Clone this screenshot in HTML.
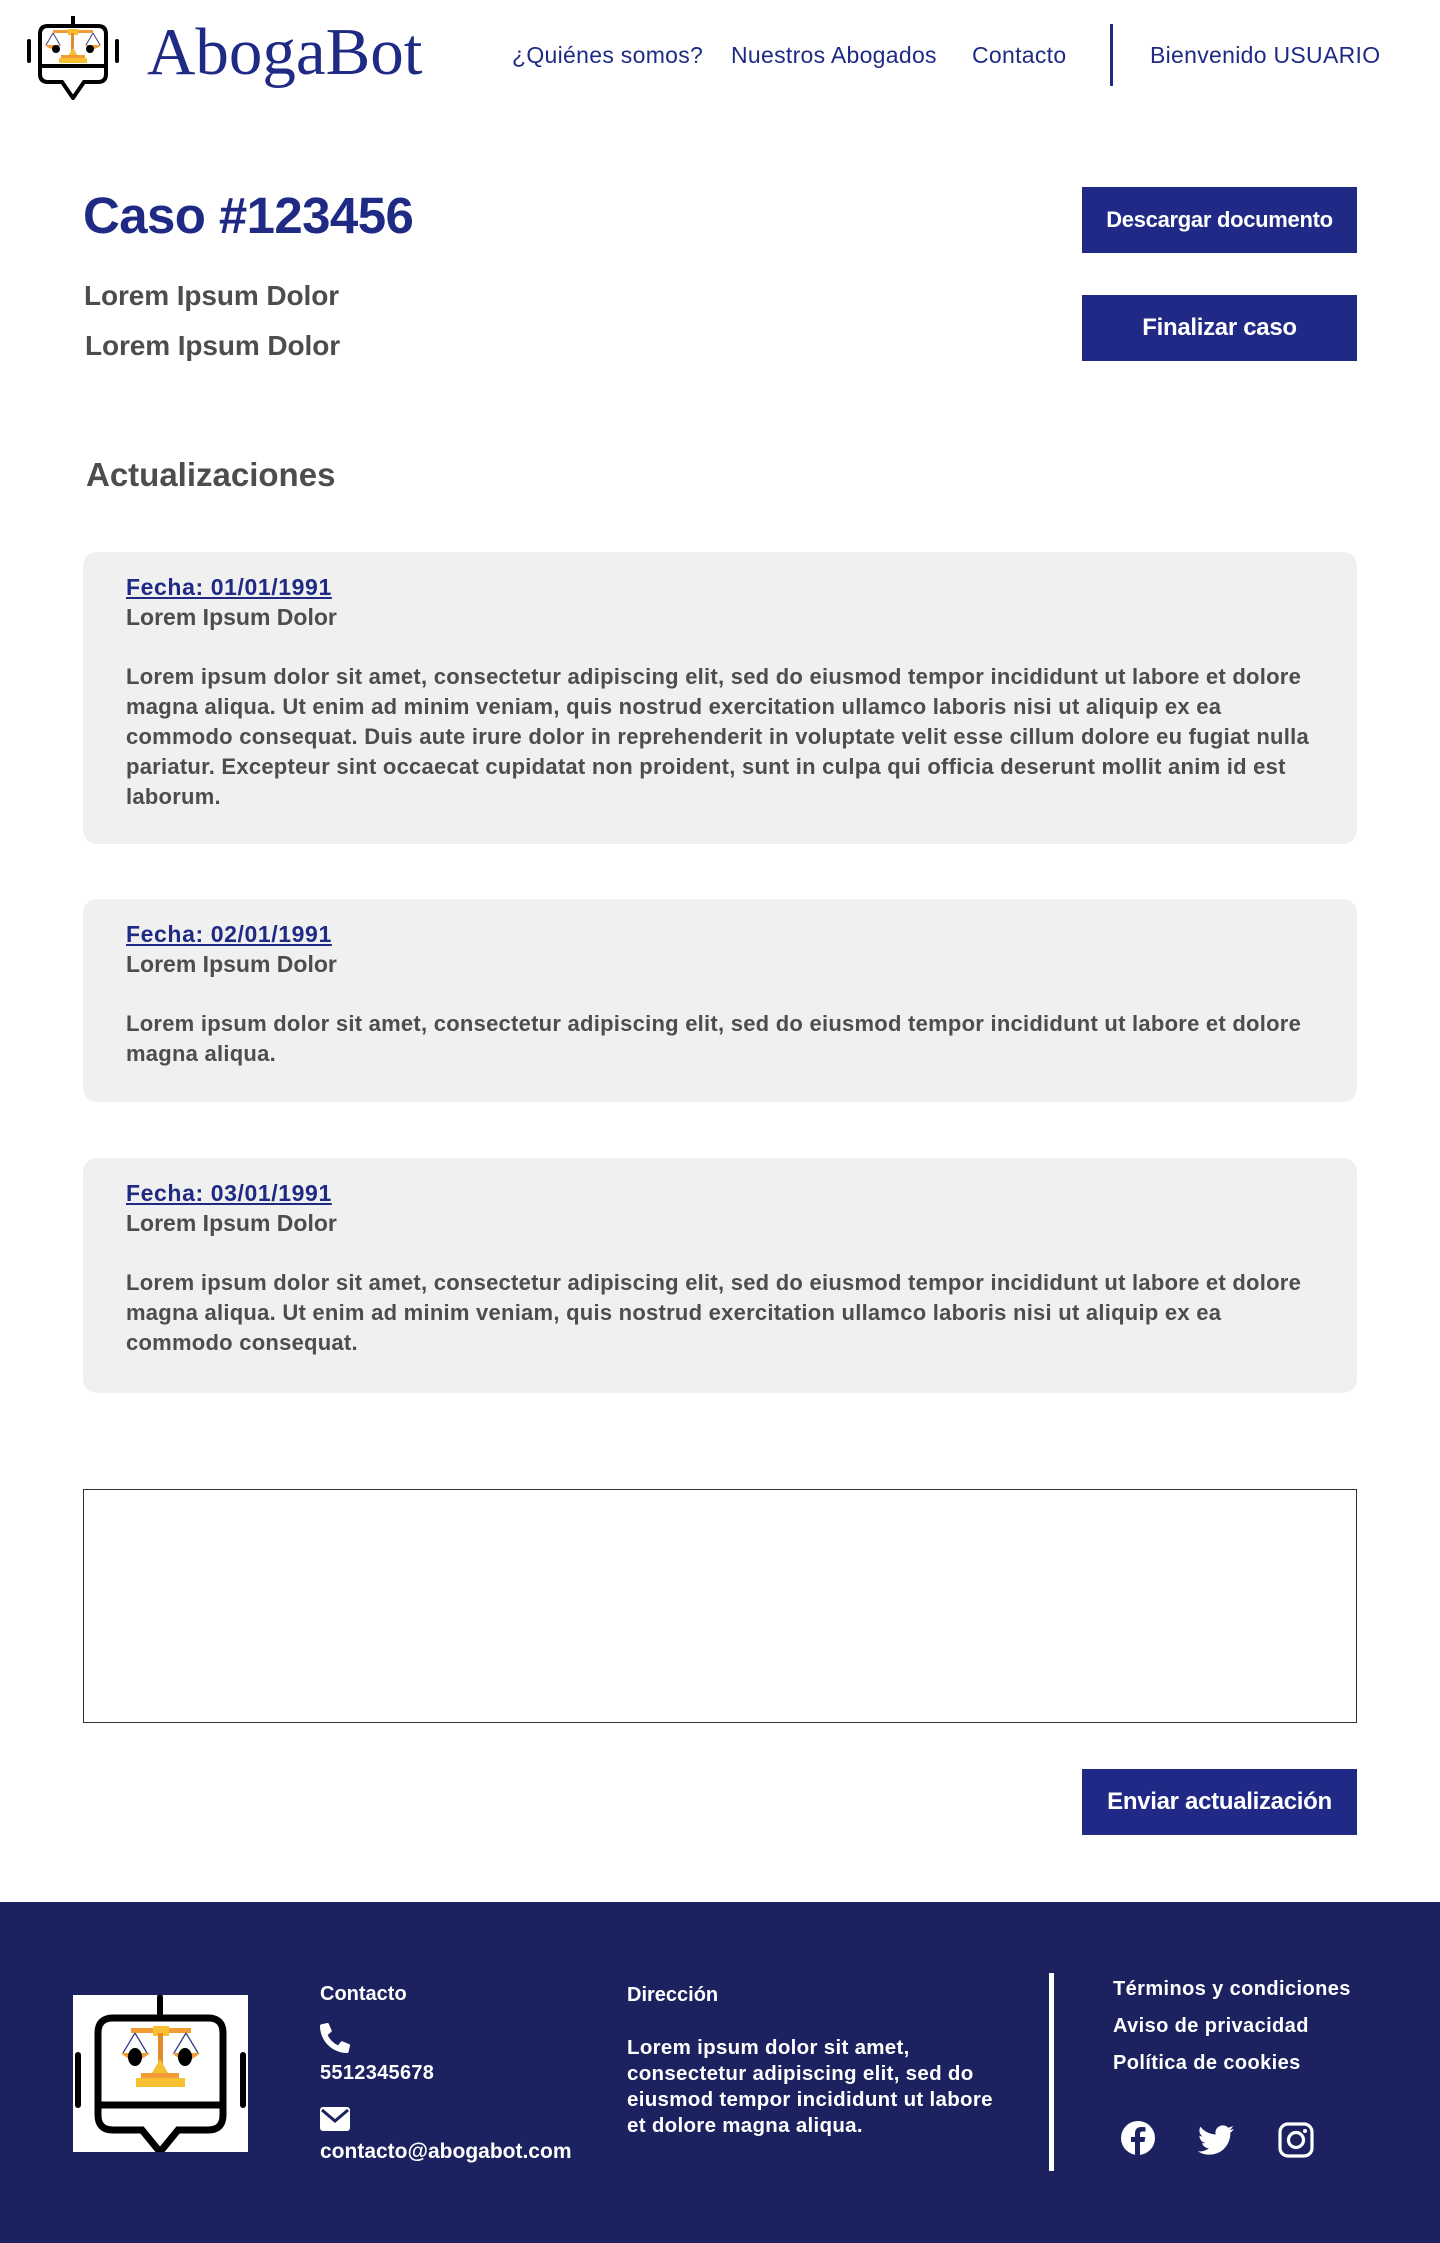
<!DOCTYPE html>
<html><head><meta charset="utf-8">
<style>
*{margin:0;padding:0;box-sizing:border-box}
body{width:1440px;height:2243px;background:#fff;font-family:"Liberation Sans",sans-serif;position:relative;overflow:hidden}
.a{position:absolute;white-space:nowrap}
.blue{color:#1f2a85}
.nav{font-size:23px;color:#1f2a85;top:42px;letter-spacing:0.3px}
.btn{position:absolute;left:1082px;width:275px;background:#212987;color:#fff;font-weight:bold;display:flex;align-items:center;justify-content:center;letter-spacing:-0.3px}
.card{position:absolute;left:83px;width:1274px;background:#f0f0f0;border-radius:14px}
.card .f{position:absolute;left:43px;font-size:23px;font-weight:bold;color:#1f2a85;text-decoration:underline;letter-spacing:0.6px}
.card .s{position:absolute;left:43px;font-size:23px;font-weight:bold;color:#4d4d4d;letter-spacing:0px}
.card .b{position:absolute;left:43px;font-size:22px;line-height:30px;font-weight:bold;color:#4d4d4d;letter-spacing:0.25px;white-space:nowrap}
.ft{color:#fff;font-weight:bold;font-size:20px;letter-spacing:0px}
</style></head><body>

<svg class="a" style="left:26px;top:16px" width="94" height="84" viewBox="0 0 94 84">
<line x1="47" y1="0" x2="47" y2="10" stroke="#000" stroke-width="4"/>
<line x1="3" y1="25" x2="3" y2="45" stroke="#000" stroke-width="4" stroke-linecap="round"/>
<line x1="91" y1="25" x2="91" y2="45" stroke="#000" stroke-width="4" stroke-linecap="round"/>
<path d="M22 10 H72 Q80 10 80 18 V58 Q80 66 72 66 H58 L47 82 L36 66 H22 Q14 66 14 58 V18 Q14 10 22 10 Z" fill="none" stroke="#000" stroke-width="4"/>
<line x1="14" y1="50" x2="80" y2="50" stroke="#000" stroke-width="4"/>
<rect x="27" y="14" width="40" height="3" fill="#f39b34"/>
<rect x="42" y="13" width="10" height="6" fill="#f7c030"/>
<rect x="45" y="17" width="3" height="20" fill="#e38a2c"/>
<path d="M27 17 L20 29 M27 17 L34 29 M67 17 L60 29 M67 17 L74 29" stroke="#3a4088" stroke-width="1"/>
<path d="M19 29 H35 Q27 37 19 29Z M59 29 H75 Q67 37 59 29Z" fill="#f39b34"/>
<circle cx="30" cy="33" r="4" fill="#000"/><circle cx="64" cy="33" r="4" fill="#000"/>
<path d="M47 32 L52 40 H42Z" fill="#f7c030"/>
<rect x="35" y="39" width="24" height="3" fill="#f39b34"/>
<rect x="33" y="42" width="28" height="5" fill="#f7c030"/>
</svg>
<div class="a blue" style="left:147px;top:12px;font-family:'Liberation Serif',serif;font-size:67px;line-height:80px">AbogaBot</div>

<div class="a nav" style="left:512px">¿Quiénes somos?</div>
<div class="a nav" style="left:731px">Nuestros Abogados</div>
<div class="a nav" style="left:972px">Contacto</div>
<div class="a" style="left:1110px;top:24px;width:3px;height:62px;background:#1f2a85"></div>
<div class="a nav" style="left:1150px">Bienvenido USUARIO</div>

<div class="a blue" style="left:83px;top:186px;font-size:51px;font-weight:bold;letter-spacing:-0.6px">Caso #123456</div>
<div class="a" style="left:84px;top:280px;font-size:28px;font-weight:bold;color:#4d4d4d;letter-spacing:-0.1px">Lorem Ipsum Dolor</div>
<div class="a" style="left:85px;top:330px;font-size:28px;font-weight:bold;color:#4d4d4d;letter-spacing:-0.1px">Lorem Ipsum Dolor</div>

<div class="btn" style="top:187px;height:66px;font-size:22px">Descargar documento</div>
<div class="btn" style="top:295px;height:66px;font-size:24px">Finalizar caso</div>

<div class="a" style="left:86px;top:456px;font-size:33px;font-weight:bold;color:#4d4d4d;letter-spacing:0px">Actualizaciones</div>

<div class="card" style="top:552px;height:292px">
<div class="f" style="top:22px">Fecha: 01/01/1991</div>
<div class="s" style="top:52px">Lorem Ipsum Dolor</div>
<div class="b" style="top:110px">Lorem ipsum dolor sit amet, consectetur adipiscing elit, sed do eiusmod tempor incididunt ut labore et dolore<br>magna aliqua. Ut enim ad minim veniam, quis nostrud exercitation ullamco laboris nisi ut aliquip ex ea<br>commodo consequat. Duis aute irure dolor in reprehenderit in voluptate velit esse cillum dolore eu fugiat nulla<br>pariatur. Excepteur sint occaecat cupidatat non proident, sunt in culpa qui officia deserunt mollit anim id est<br>laborum.</div>
</div>

<div class="card" style="top:899px;height:203px">
<div class="f" style="top:22px">Fecha: 02/01/1991</div>
<div class="s" style="top:52px">Lorem Ipsum Dolor</div>
<div class="b" style="top:110px">Lorem ipsum dolor sit amet, consectetur adipiscing elit, sed do eiusmod tempor incididunt ut labore et dolore<br>magna aliqua.</div>
</div>

<div class="card" style="top:1158px;height:235px">
<div class="f" style="top:22px">Fecha: 03/01/1991</div>
<div class="s" style="top:52px">Lorem Ipsum Dolor</div>
<div class="b" style="top:110px">Lorem ipsum dolor sit amet, consectetur adipiscing elit, sed do eiusmod tempor incididunt ut labore et dolore<br>magna aliqua. Ut enim ad minim veniam, quis nostrud exercitation ullamco laboris nisi ut aliquip ex ea<br>commodo consequat.</div>
</div>

<div class="a" style="left:83px;top:1489px;width:1274px;height:234px;border:1px solid #333"></div>
<div class="btn" style="top:1769px;height:66px;font-size:24px">Enviar actualización</div>

<div class="a" style="left:0;top:1902px;width:1440px;height:341px;background:#1c2260"></div>
<div class="a" style="left:73px;top:1995px;width:175px;height:157px;background:#fff"></div>
<svg class="a" style="left:73px;top:1995px" width="175" height="157" viewBox="0 0 175 157">
<line x1="87" y1="2" x2="87" y2="22" stroke="#000" stroke-width="6" stroke-linecap="round"/>
<line x1="5" y1="60" x2="5" y2="110" stroke="#000" stroke-width="6" stroke-linecap="round"/>
<line x1="170" y1="60" x2="170" y2="110" stroke="#000" stroke-width="6" stroke-linecap="round"/>
<path d="M40 23 H135 Q150 23 150 38 V120 Q150 135 135 135 H105 L87 157 L69 135 H40 Q25 135 25 120 V38 Q25 23 40 23 Z" fill="none" stroke="#000" stroke-width="7"/>
<line x1="25" y1="110" x2="150" y2="110" stroke="#000" stroke-width="7"/>
<rect x="58" y="33" width="60" height="5" fill="#f39b34"/>
<rect x="80" y="31" width="16" height="10" fill="#f7c030"/>
<rect x="85" y="38" width="5" height="32" fill="#e38a2c"/>
<path d="M62 38 L50 58 M62 38 L74 58 M113 38 L101 58 M113 38 L125 58" stroke="#3a4088" stroke-width="1.3"/>
<path d="M48 58 H77 Q62 72 48 58Z M99 58 H127 Q113 72 99 58Z" fill="#f39b34"/>
<ellipse cx="62" cy="62" rx="7" ry="9" fill="#000"/><ellipse cx="112" cy="62" rx="7" ry="9" fill="#000"/>
<path d="M87 64 L95 78 H79Z" fill="#f7c030"/>
<rect x="68" y="78" width="38" height="5" fill="#f39b34"/>
<rect x="63" y="83" width="49" height="9" fill="#f7c030"/>
</svg>

<div class="a ft" style="left:320px;top:1983px">Contacto</div>
<svg class="a" style="left:320px;top:2023px" width="30" height="30" viewBox="0 0 512 512"><path fill="#fff" d="M497 361l-112-48a24 24 0 0 0-28 7l-50 61A371 371 0 0 1 130 204l61-50a24 24 0 0 0 7-28L150 14a24 24 0 0 0-27-14L19 24A24 24 0 0 0 0 48c0 257 208 464 464 464a24 24 0 0 0 24-19l24-104a24 24 0 0 0-15-28z"/></svg>
<div class="a ft" style="left:320px;top:2062px;letter-spacing:0.3px">5512345678</div>
<svg class="a" style="left:320px;top:2107px" width="30" height="24" viewBox="0 0 30 24"><rect width="30" height="24" rx="3" fill="#fff"/><path d="M2 3 L15 14 L28 3" fill="none" stroke="#1c2260" stroke-width="3"/></svg>
<div class="a ft" style="left:320px;top:2140px;font-size:21px">contacto@abogabot.com</div>

<div class="a ft" style="left:627px;top:1984px">Dirección</div>
<div class="a ft" style="left:627px;top:2035px;line-height:26px;font-size:20.5px;letter-spacing:0.3px">Lorem ipsum dolor sit amet,<br>consectetur adipiscing elit, sed do<br>eiusmod tempor incididunt ut labore<br>et dolore magna aliqua.</div>

<div class="a" style="left:1049px;top:1973px;width:5px;height:198px;background:#fff"></div>
<div class="a ft" style="left:1113px;top:1978px;letter-spacing:0.4px">Términos y condiciones</div>
<div class="a ft" style="left:1113px;top:2015px;letter-spacing:0.4px">Aviso de privacidad</div>
<div class="a ft" style="left:1113px;top:2052px;letter-spacing:0.4px">Política de cookies</div>

<svg class="a" style="left:1120px;top:2120px" width="36" height="36" viewBox="0 0 36 36"><circle cx="18" cy="18" r="17" fill="#fff"/><path d="M20 36 V22 H24.5 L25.3 17 H20 V13.8 Q20 11.5 22.5 11.5 H25.5 V7.3 Q23.5 7 21.5 7 Q15 7 15 13.5 V17 H11 V22 H15 V36Z" fill="#1c2260"/></svg>
<svg class="a" style="left:1198px;top:2124px" width="36" height="32" viewBox="0 0 512 416"><path fill="#fff" d="M459 104c1 4 1 9 1 13 0 139-106 299-299 299-59 0-115-17-161-47 8 1 16 1 25 1 49 0 94-17 130-45-46-1-85-31-98-73 7 1 13 2 20 2 9 0 19-1 27-4-48-10-84-52-84-103v-1c14 8 30 13 47 13-28-19-47-51-47-87 0-20 5-38 15-53 52 64 129 106 216 110-2-8-3-16-3-24 0-58 47-105 105-105 30 0 58 13 77 33 24-5 46-13 67-26-8 24-25 45-46 58 21-2 42-8 60-16-14 21-32 40-52 55z"/></svg>
<svg class="a" style="left:1278px;top:2122px" width="36" height="36" viewBox="0 0 36 36"><rect x="2" y="2" width="32" height="32" rx="8" fill="none" stroke="#fff" stroke-width="3.2"/><circle cx="18" cy="18" r="7.5" fill="none" stroke="#fff" stroke-width="3.2"/><circle cx="27" cy="9" r="2" fill="#fff"/></svg>

</body></html>
